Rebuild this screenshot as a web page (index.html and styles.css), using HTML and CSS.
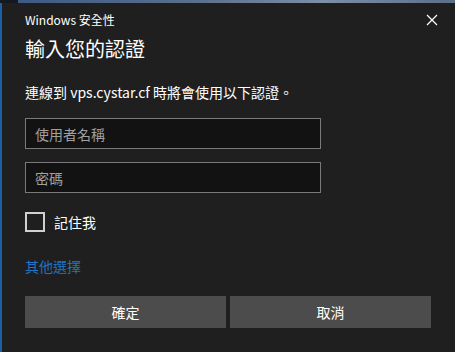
FILE: index.html
```html
<!DOCTYPE html>
<html lang="zh-Hant">
<head>
    <meta charset="UTF-8">
    <title>Windows 安全性</title>
    <link rel="stylesheet" href="styles.css">
</head>
<body>
    <div class="desktop-strip"><span class="strip-dark"></span><span class="strip-wall"></span></div>

    <div class="dialog">
        <div class="titlebar">
            <span class="app-title">Windows 安全性</span>
            <span class="close">
                <svg width="12" height="12" viewBox="0 0 12 12"><path d="M1 1 L11 11 M11 1 L1 11" stroke="#fff" stroke-width="1.2" fill="none"/></svg>
            </span>
        </div>

        <h1 class="heading">輸入您的認證</h1>
        <p class="message">連線到 vps.cystar.cf 時將會使用以下認證。</p>

        <form class="cred-form">
            <input type="text" class="field" placeholder="使用者名稱">
            <input type="password" class="field" placeholder="密碼">

            <label class="remember">
                <span class="box"></span>
                <span>記住我</span>
            </label>

            <a class="more" href="#">其他選擇</a>

            <div class="buttons">
                <button type="button" class="btn">確定</button>
                <button type="button" class="btn">取消</button>
            </div>
        </form>
    </div>
</body>
</html>
```

FILE: styles.css
```css
body {
    margin: 0;
    width: 455px;
    height: 352px;
    overflow: hidden;
    background: #1f1f1f;
    font-family: "Noto Sans CJK TC", "Noto Sans", sans-serif;
    color: #fff;
}
.desktop-strip {
    display: flex;
    height: 3px;
}
.strip-dark {
    width: 18px;
    background: #141820;
}
.strip-wall {
    flex: 1;
    background: linear-gradient(90deg, #3e5a84, #5a6f8c 40%, #7d8ea6 70%, #5c6f8a);
}
.dialog {
    height: 349px;
    box-sizing: border-box;
    border-left: 2px solid #1b5fa6;
    background: #1f1f1f;
    padding: 0 24px 0 23px;
}
.titlebar {
    display: flex;
    justify-content: space-between;
    align-items: center;
    height: 32px;
}
.app-title {
    font-size: 12px;
    color: #fff;
    padding-top: 1px;
}
.close {
    display: flex;
    margin-right: -7px;
    margin-top: 2px;
}
.heading {
    margin: 0;
    font-size: 20px;
    font-weight: normal;
    line-height: 28px;
}
.message {
    margin: 20px 0 0;
    font-size: 14px;
    line-height: 18px;
}
.cred-form {
    display: flex;
    flex-direction: column;
    margin-top: 17px;
}
.field {
    width: 296px;
    height: 31px;
    box-sizing: border-box;
    margin: 0 0 13px;
    padding: 0 9px;
    border: 1px solid #7a7a7a;
    background: #121212;
    color: #fff;
    font-family: inherit;
    font-size: 14px;
    outline: none;
}
.field::placeholder {
    color: #a0a0a0;
}
.remember {
    display: flex;
    align-items: center;
    gap: 9px;
    margin-top: 6px;
    font-size: 14px;
}
.box {
    width: 20px;
    height: 20px;
    box-sizing: border-box;
    border: 2px solid #d0d0d0;
}
.more {
    margin-top: 25px;
    font-size: 14px;
    color: #1f74c6;
    text-decoration: none;
    line-height: 18px;
}
.buttons {
    display: grid;
    grid-template-columns: 1fr 1fr;
    gap: 4px;
    margin-top: 21px;
}
.btn {
    height: 32px;
    border: none;
    background: #4c4c4c;
    color: #fff;
    font-family: inherit;
    font-size: 14px;
}
```
